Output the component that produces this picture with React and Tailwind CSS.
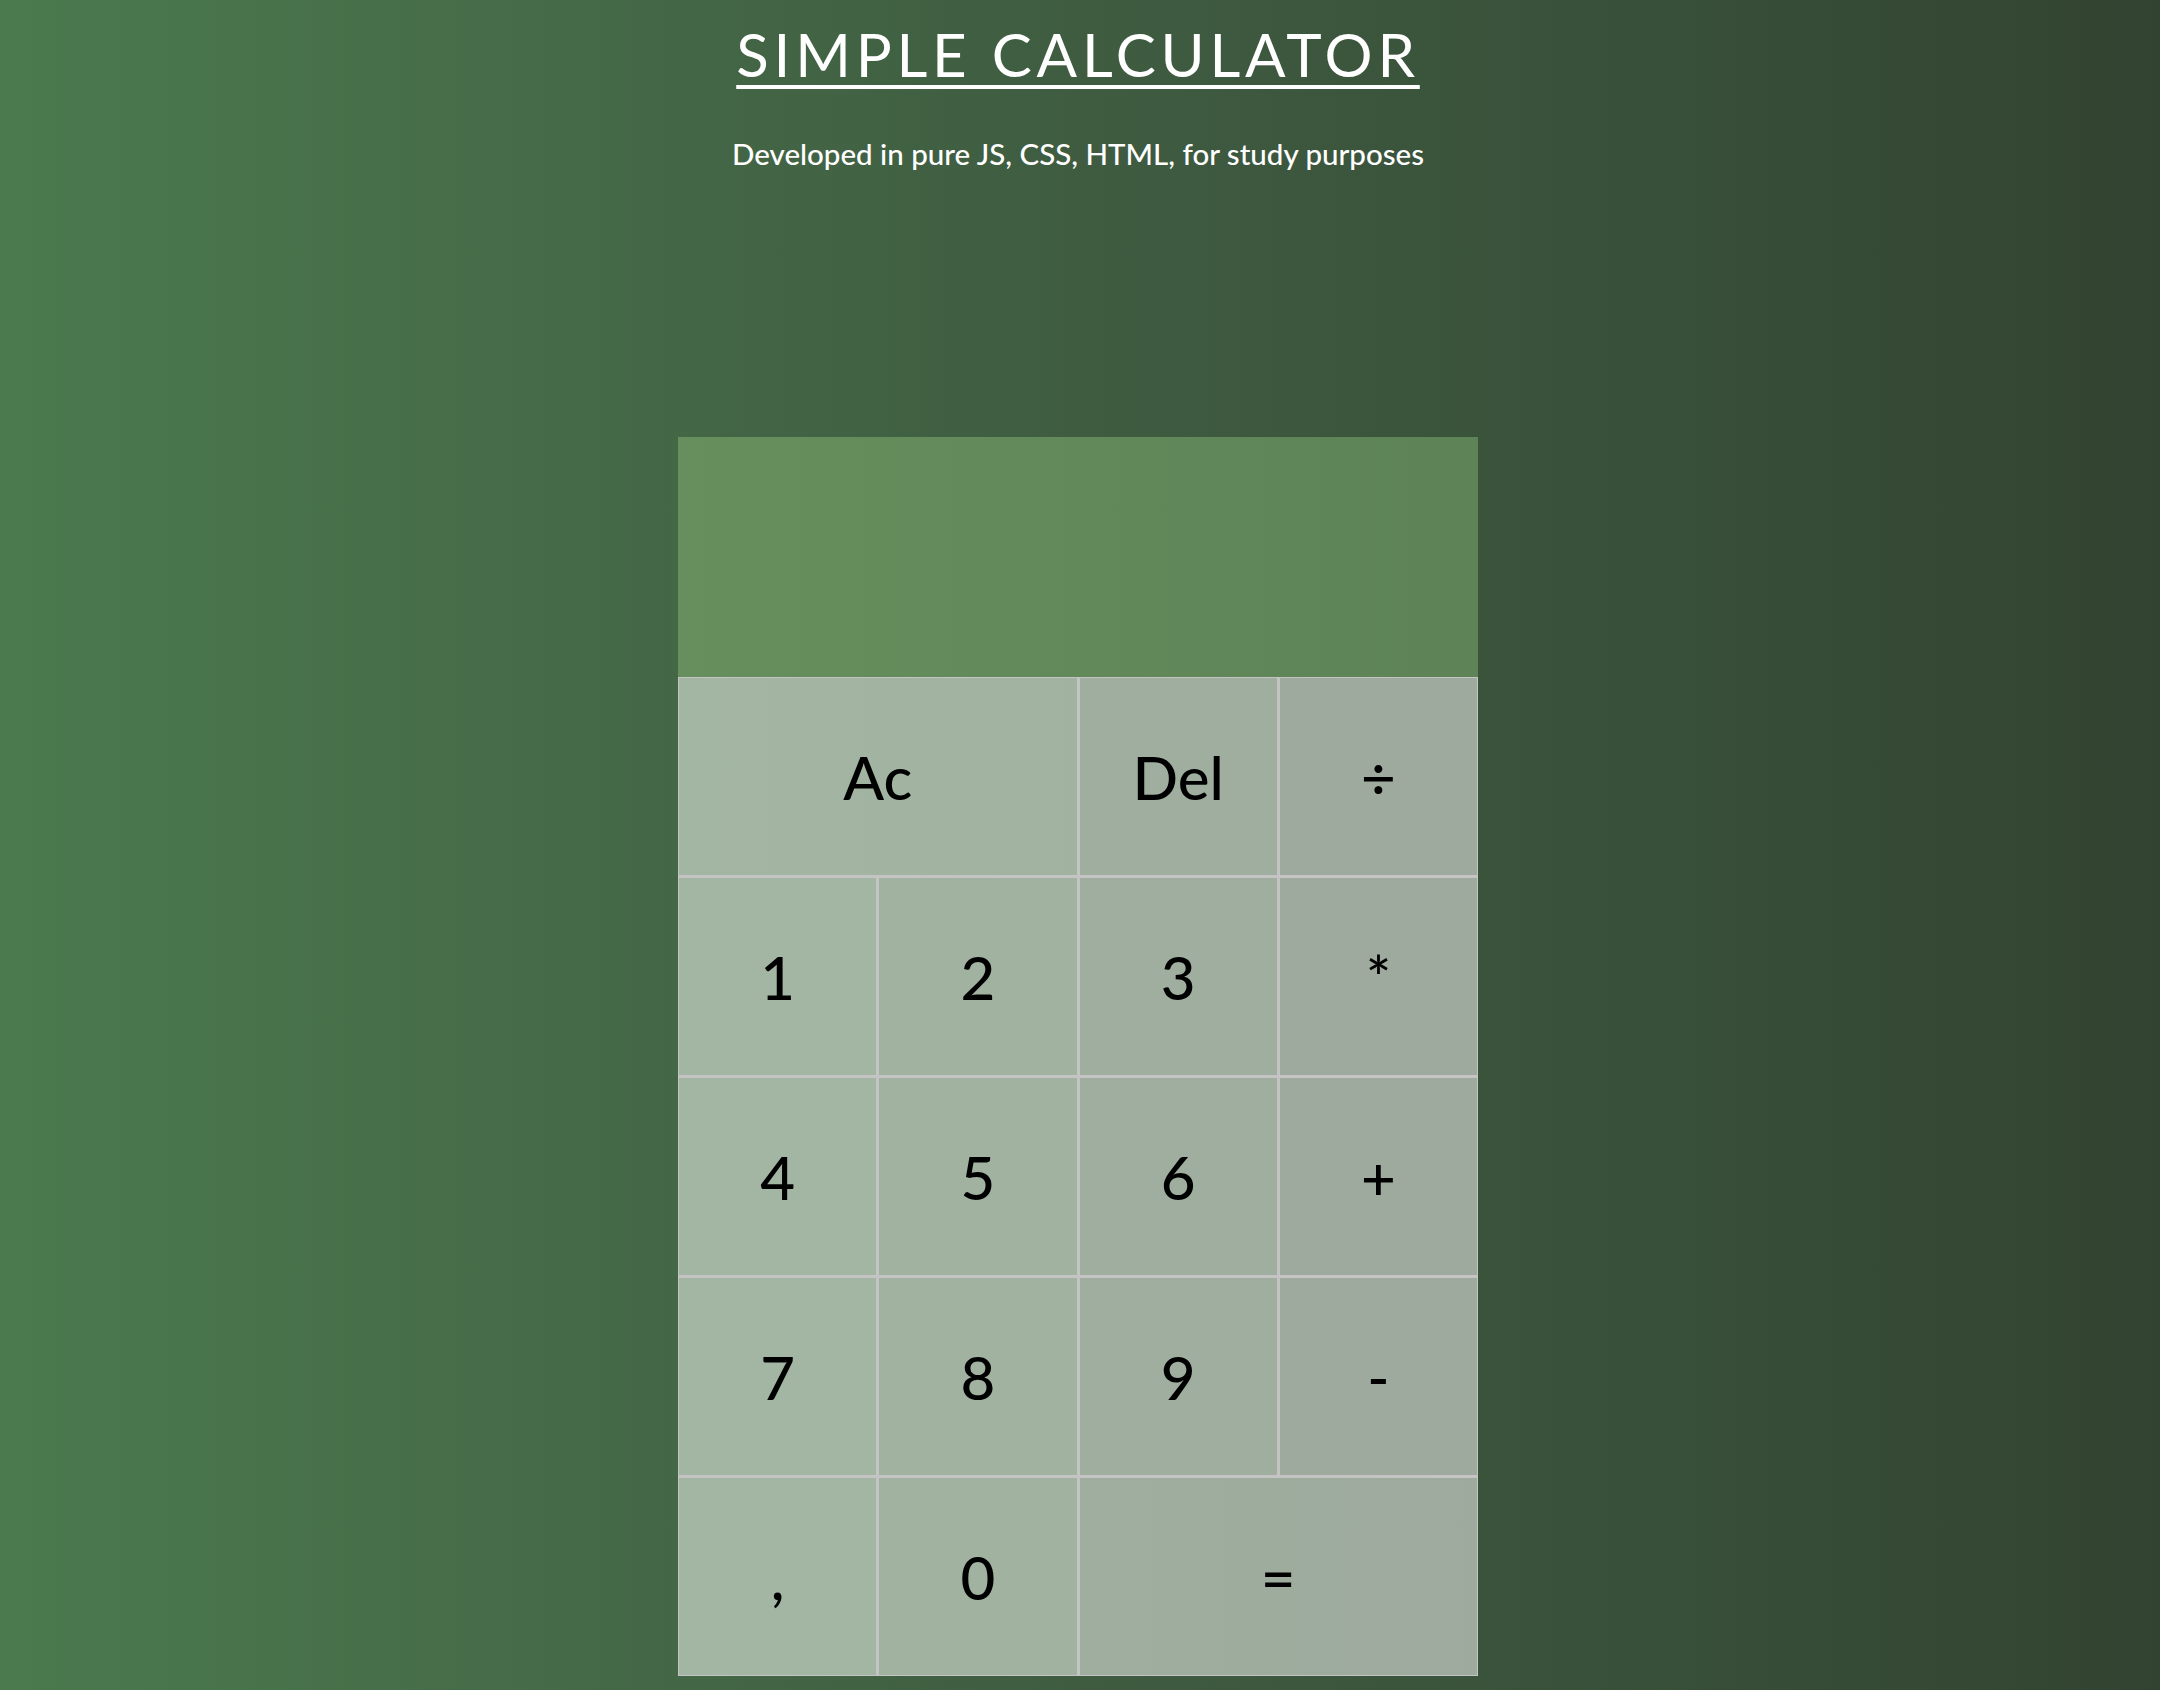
import React from 'react';

const App = () => {
  // per-column shades so the key pad keeps the soft left-to-right fade
  const keys = [
    { label: 'Ac', bg: 'col-span-2 bg-gradient-to-r from-[#a3b5a3] to-[#a1b2a1]' },
    { label: 'Del', bg: 'bg-[#9fae9f]' },
    { label: '÷', bg: 'bg-[#9daa9d]' },
    { label: '1', bg: 'bg-[#a3b5a3]' },
    { label: '2', bg: 'bg-[#a1b2a1]' },
    { label: '3', bg: 'bg-[#9fae9f]' },
    { label: '*', bg: 'bg-[#9daa9d]' },
    { label: '4', bg: 'bg-[#a3b5a3]' },
    { label: '5', bg: 'bg-[#a1b2a1]' },
    { label: '6', bg: 'bg-[#9fae9f]' },
    { label: '+', bg: 'bg-[#9daa9d]' },
    { label: '7', bg: 'bg-[#a3b5a3]' },
    { label: '8', bg: 'bg-[#a1b2a1]' },
    { label: '9', bg: 'bg-[#9fae9f]' },
    { label: '-', bg: 'bg-[#9daa9d]' },
    { label: ',', bg: 'bg-[#a3b5a3]' },
    { label: '0', bg: 'bg-[#a1b2a1]' },
    { label: '=', bg: 'col-span-2 bg-gradient-to-r from-[#9fae9f] to-[#9daa9d]' },
  ];

  return (
    <div
      className="min-h-screen w-full pr-[4px] bg-gradient-to-r from-[#4b7a4e] via-[#3f5c41] to-[#324431] flex flex-col items-center text-white"
      style={{ fontFamily: 'Lato, "Open Sans", sans-serif' }}
    >
      <h1 className="mt-[18px] text-[60px] leading-[72px] font-normal tracking-[0.08em] underline decoration-[4px] underline-offset-[8px]">
        SIMPLE CALCULATOR
      </h1>
      <p className="mt-[46px] text-[29.5px] leading-[36px] font-medium">Developed in pure JS, CSS, HTML, for study purposes</p>

      {/* Calculator */}
      <div className="mt-[265px] w-[800px]">
        <div className="h-[240px] bg-gradient-to-r from-[#668f5d] to-[#5d8356]"></div>
        <div className="grid grid-cols-4 auto-rows-[197px] gap-[3px] p-[1px] bg-[#c4c4c4]">
          {keys.map((k) => (
            <button
              key={k.label}
              className={`${k.bg} flex items-center justify-center text-[60px] font-medium text-black`}
            >
              {k.label}
            </button>
          ))}
        </div>
      </div>
    </div>
  );
};

export default App;
